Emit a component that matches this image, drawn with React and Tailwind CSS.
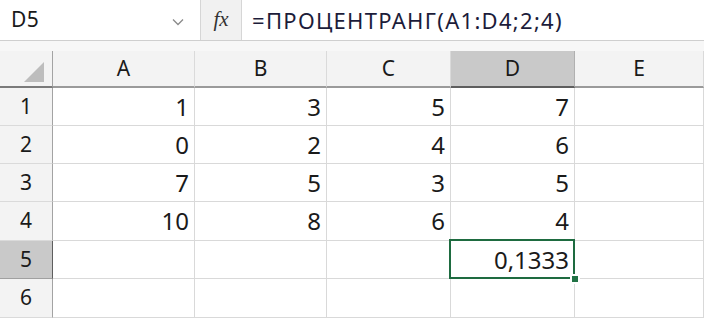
import React from 'react';

const cols = ['A', 'B', 'C', 'D', 'E'];
const data = [
  ['1', '3', '5', '7', ''],
  ['0', '2', '4', '6', ''],
  ['7', '5', '3', '5', ''],
  ['10', '8', '6', '4', ''],
  ['', '', '', '0,1333', ''],
  ['', '', '', '', ''],
];

export default function App() {
  return (
    <div className="w-[704px] h-[318px] overflow-hidden bg-white text-[#1a1a1a]" style={{ fontFamily: '"Noto Sans", "Open Sans", sans-serif' }}>
      {/* Formula bar */}
      <div className="flex h-[41px] border-b border-[#cfcfcf] bg-white">
        <div className="w-[201px] flex items-center justify-between pl-[11px] pr-[16px] border-r border-[#d6d6d6]">
          <span className="text-[21px] tracking-[0.5px]">D5</span>
          <svg width="12" height="8" viewBox="0 0 12 8" className="mt-[3px]">
            <polyline points="1,1.5 6,6.5 11,1.5" fill="none" stroke="#8a8a8a" strokeWidth="1.3" />
          </svg>
        </div>
        <div className="w-[41px] flex items-center justify-center bg-[#f1f1f1] border-r border-[#d6d6d6]">
          <span className="italic text-[21px] text-[#333]" style={{ fontFamily: '"Liberation Serif", serif' }}>fx</span>
        </div>
        <div className="flex-1 flex items-center pl-[10px] text-[22px] tracking-[1.3px] text-[#1c1c3a]">
          =ПРОЦЕНТРАНГ(A1:D4;2;4)
        </div>
      </div>
      {/* Gap */}
      <div className="h-[10px] bg-[#f7f7f7]" />
      {/* Grid */}
      <div className="grid grid-cols-[53px_142px_132px_124px_124px_129px] grid-rows-[37px_38px_38px_38px_39px_38px_39px]">
        <div className="bg-[#f3f3f3] border-r border-b-2 border-r-[#a3a3a3] border-b-[#7a7a7a] flex items-end justify-end pr-[8px] pb-[4px]">
          <svg width="20" height="20" viewBox="0 0 20 20">
            <polygon points="20,0 20,20 0,20" fill="#bdbdbd" />
          </svg>
        </div>
        {cols.map((c) => (
          <div
            key={c}
            className={`flex items-center justify-center text-[21px] border-b-2 border-r ${
              c === 'D' ? 'bg-[#c9c9c9] border-b-[#5e5e5e] border-r-[#b0b0b0]' : 'bg-[#f3f3f3] border-b-[#9a9a9a] border-r-[#dadada]'
            }`}
          >
            {c}
          </div>
        ))}
        {data.map((row, r) => (
          <React.Fragment key={r}>
            <div
              className={`flex items-center justify-center text-[21px] border-r border-b ${
                r === 4 ? 'bg-[#c9c9c9] border-r-[#5e5e5e] border-b-[#a0a0a0]' : 'bg-[#f3f3f3] border-r-[#a3a3a3] border-b-[#dadada]'
              }`}
            >
              {r + 1}
            </div>
            {row.map((v, c) => (
              <div key={c} className="relative flex items-center justify-end pr-[5px] text-[24px] border-r border-b border-[#d9d9d9]">
                {v}
                {r === 4 && c === 3 && (
                  <>
                    <div className="absolute -left-[2px] -top-[2px] -right-[1px] -bottom-[1px] border-2 border-[#1e6b40] z-10" />
                    <div className="absolute -right-[6px] -bottom-[6px] w-[10px] h-[10px] bg-[#217346] border-2 border-white z-20" />
                  </>
                )}
              </div>
            ))}
          </React.Fragment>
        ))}
      </div>
    </div>
  );
}
